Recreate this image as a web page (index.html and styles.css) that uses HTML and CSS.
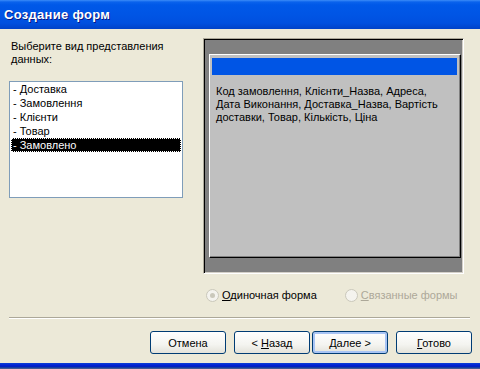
FILE: index.html
```html
<!DOCTYPE html>
<html lang="ru">
<head>
    <meta charset="UTF-8">
    <title>Создание форм</title>
    <link rel="stylesheet" href="styles.css">
</head>
<body>
    <div class="titlebar">Создание форм</div>

    <div class="main">
        <div class="left">
            <div class="label">Выберите вид представления<br>данных:</div>
            <ul class="listbox">
                <li>- Доставка</li>
                <li>- Замовлення</li>
                <li>- Клієнти</li>
                <li>- Товар</li>
                <li class="selected">- Замовлено</li>
            </ul>
        </div>

        <div class="right">
            <div class="frame">
                <div class="panel">
                    <div class="panel-head"></div>
                    <p class="fields">Код замовлення, Клієнти_Назва, Адреса, Дата Виконання, Доставка_Назва, Вартість доставки, Товар, Кількість, Ціна</p>
                </div>
            </div>
            <div class="radios">
                <label class="radio">
                    <span class="circle checked"></span>
                    <span class="radio-text"><u>О</u>диночная форма</span>
                </label>
                <label class="radio disabled">
                    <span class="circle"></span>
                    <span class="radio-text"><u>С</u>вязанные формы</span>
                </label>
            </div>
        </div>
    </div>

    <div class="separator"></div>

    <div class="buttons">
        <button class="btn">Отмена</button>
        <button class="btn">&lt; <u>Н</u>азад</button>
        <button class="btn btn-default"><u>Д</u>алее &gt;</button>
        <button class="btn"><u>Г</u>отово</button>
    </div>

    <div class="bottom-edge"></div>
</body>
</html>
```

FILE: styles.css
```css
body {
    margin: 0;
    width: 480px;
    height: 369px;
    overflow: hidden;
    background: #ece9d8;
    font-family: "Liberation Sans", Arial, sans-serif;
    font-size: 11px;
    color: #000;
    display: flex;
    flex-direction: column;
}

body > div {
    flex-shrink: 0;
}

.titlebar {
    height: 29px;
    box-sizing: border-box;
    padding: 7px 0 0 4px;
    line-height: 16px;
    font-size: 13px;
    font-weight: bold;
    letter-spacing: 0.3px;
    color: #fff;
    text-shadow: 1px 1px 0 #0a1883;
    background: linear-gradient(#3c8cf8 0, #0a62ec 2px, #0058e8 5px, #0055e5 50%, #0050df 80%, #0042c8 100%);
}

.main {
    display: flex;
    padding: 9px 0 0 9px;
}

.left {
    width: 174px;
    padding-top: 2px;
}

.label {
    line-height: 13px;
    padding-left: 2px;
    white-space: nowrap;
}

.listbox {
    list-style: none;
    margin: 15px 0 0;
    padding: 0 1px;
    height: 115px;
    border: 1px solid #7f9db9;
    background: #fff;
}

.listbox li {
    height: 14px;
    line-height: 15px;
    padding-left: 2px;
    white-space: nowrap;
}

.listbox .selected {
    background: #000;
    color: #fff;
    outline: 1px dotted #fff;
    outline-offset: -1px;
}

.right {
    margin-left: 20px;
}

.frame {
    width: 261px;
    height: 236px;
    box-sizing: border-box;
    border: 1px solid;
    border-color: #aca899 #fff #fff #aca899;
    box-shadow: inset 1px 1px 0 #000, inset -1px -1px 0 #d4d0c8;
    background: #808080;
    padding: 15px 2px 15px 5px;
}

.panel {
    height: 204px;
    box-sizing: border-box;
    border: 1px solid;
    border-color: #fff #000 #000 #fff;
    box-shadow: inset -1px -1px 0 #808080;
    background: #c0c0c0;
    padding: 3px 3px 0 2px;
}

.panel-head {
    height: 17px;
    background: #0055e5;
}

.fields {
    margin: 10px 0 0 4px;
    line-height: 13px;
    width: 235px;
}

.radios {
    display: flex;
    margin-top: 14px;
    height: 14px;
}

.radio {
    display: flex;
    align-items: center;
    color: #000;
}

.radio + .radio {
    margin-left: 25px;
}

.radio.disabled {
    color: #aca899;
}

.circle {
    width: 11px;
    height: 11px;
    border: 1px solid #cac8bb;
    border-radius: 50%;
    background: #f4f3ee;
    margin: 0 3px 0 3px;
    display: flex;
    align-items: center;
    justify-content: center;
}

.circle.checked::after {
    content: "";
    width: 5px;
    height: 5px;
    border-radius: 50%;
    background: #cac8bb;
}

.separator {
    margin: 15px 10px 0 9px;
    height: 1px;
    background: #aca899;
    border-bottom: 1px solid #fff;
}

.buttons {
    display: flex;
    justify-content: flex-end;
    padding-right: 8px;
    margin-top: 12px;
}

.btn {
    width: 76px;
    height: 23px;
    box-sizing: border-box;
    margin-left: 8px;
    border: 1px solid #003c74;
    border-radius: 3px;
    background: linear-gradient(#fff 0, #f4f4f0 60%, #e3e2da 100%);
    font-family: inherit;
    font-size: 11px;
    color: #000;
    padding: 0;
}

.btn-default {
    margin-left: 2px;
    box-shadow: inset 0 0 0 2px #a8c4f4;
}

.bottom-edge {
    margin-top: auto;
    height: 6px;
    background: linear-gradient(#0a3fd8 0, #0019cf 3px, #002bb0 4px, #5a6a8c 100%);
}
```
